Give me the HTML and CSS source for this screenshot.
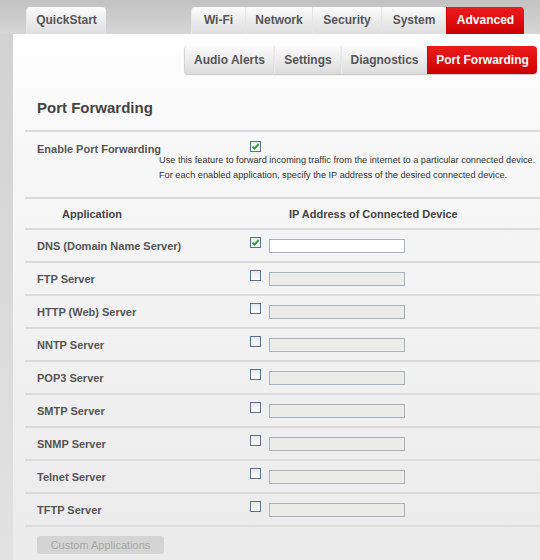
FILE: index.html
```html
<!DOCTYPE html>
<html lang="en">
<head>
    <meta charset="UTF-8">
    <title>Port Forwarding</title>
    <link rel="stylesheet" href="styles.css">
</head>
<body>
    <div class="topbar">
        <div class="tab tab-quick">QuickStart</div>
        <div class="tabs">
            <div class="tab w-wifi">Wi-Fi</div>
            <div class="tab w-net">Network</div>
            <div class="tab w-sec">Security</div>
            <div class="tab w-sys">System</div>
            <div class="tab w-adv active">Advanced</div>
        </div>
    </div>

    <div class="main">
        <div class="strip"></div>
        <div class="panel">
            <div class="subtabs">
                <div class="subtab s-audio">Audio Alerts</div>
                <div class="subtab s-set">Settings</div>
                <div class="subtab s-diag">Diagnostics</div>
                <div class="subtab s-pf active">Port Forwarding</div>
            </div>

            <h1 class="title">Port Forwarding</h1>

            <div class="section enable">
                <div class="enable-row">
                    <span class="label">Enable Port Forwarding</span>
                    <span class="cb checked"><svg viewBox="0 0 9 9"><path d="M1.5 4.6 L3.6 6.7 L7.6 2.2" /></svg></span>
                </div>
                <p class="desc">Use this feature to forward incoming traffic from the internet to a particular connected device.<br>For each enabled application, specify the IP address of the desired connected device.</p>
            </div>

            <div class="section head">
                <span class="h-app">Application</span>
                <span class="h-ip">IP Address of Connected Device</span>
            </div>

            <div class="row">
                <span class="label">DNS (Domain Name Server)</span>
                <span class="cb checked"><svg viewBox="0 0 9 9"><path d="M1.5 4.6 L3.6 6.7 L7.6 2.2" /></svg></span>
                <span class="ip"></span>
            </div>
            <div class="row">
                <span class="label">FTP Server</span>
                <span class="cb"></span>
                <span class="ip off"></span>
            </div>
            <div class="row">
                <span class="label">HTTP (Web) Server</span>
                <span class="cb"></span>
                <span class="ip off"></span>
            </div>
            <div class="row">
                <span class="label">NNTP Server</span>
                <span class="cb"></span>
                <span class="ip off"></span>
            </div>
            <div class="row">
                <span class="label">POP3 Server</span>
                <span class="cb"></span>
                <span class="ip off"></span>
            </div>
            <div class="row">
                <span class="label">SMTP Server</span>
                <span class="cb"></span>
                <span class="ip off"></span>
            </div>
            <div class="row">
                <span class="label">SNMP Server</span>
                <span class="cb"></span>
                <span class="ip off"></span>
            </div>
            <div class="row">
                <span class="label">Telnet Server</span>
                <span class="cb"></span>
                <span class="ip off"></span>
            </div>
            <div class="row last">
                <span class="label">TFTP Server</span>
                <span class="cb"></span>
                <span class="ip off"></span>
            </div>

            <div class="footer">
                <button class="btn-custom" disabled>Custom Applications</button>
            </div>
        </div>
    </div>
</body>
</html>
```

FILE: styles.css
```css
* { box-sizing: border-box; }

body {
    margin: 0;
    font-family: "Liberation Sans", Arial, sans-serif;
    background: #dcdcdc;
    color: #555;
    height: 560px;
    overflow: hidden;
}

/* top tabs */
.topbar {
    display: flex;
    align-items: flex-end;
    justify-content: space-between;
    height: 34px;
    padding: 0 16px 0 26px;
    background: linear-gradient(#c2c2c2, #d6d6d6);
}
.tabs { display: flex; }
.tab {
    height: 27px;
    line-height: 27px;
    text-align: center;
    font-size: 12px;
    font-weight: bold;
    color: #555;
    background: linear-gradient(#fbfbfb, #dedede);
    border-left: 1px solid #e6e6e6;
    border-radius: 4px 4px 0 0;
}
.tabs .tab { border-radius: 0; }
.tabs .tab:first-child { border-radius: 4px 0 0 0; }
.tabs .tab:last-child { border-radius: 0 4px 0 0; }
.tab-quick { width: 80px; }
.w-wifi { width: 54px; }
.w-net { width: 67px; }
.w-sec { width: 69px; }
.w-sys { width: 65px; }
.w-adv { width: 78px; }
.tab.active {
    background: linear-gradient(#ee1c1c, #cc0000);
    color: #fff;
    border-left-color: #d00;
}

/* body */
.main { display: flex; height: 526px; }
.strip {
    width: 13px;
    background: linear-gradient(#d2d2d2, #e2e2e2);
}
.panel {
    flex: 1;
    background: linear-gradient(#ffffff 0px, #f7f7f7 120px, #ebebeb 526px);
}

.subtabs {
    display: flex;
    justify-content: flex-end;
    padding: 12px 3px 0 0;
}
.subtab {
    height: 28px;
    line-height: 28px;
    text-align: center;
    font-size: 12px;
    font-weight: bold;
    color: #555;
    background: linear-gradient(#fbfbfb, #dcdcdc);
    border-left: 1px solid #e8e8e8;
    box-shadow: 0 1px 1px #c8c8c8;
}
.subtab:first-child { border-radius: 4px 0 0 4px; border-left: 1px solid #d4d4d4; }
.subtab:last-child { border-radius: 0 4px 4px 0; }
.s-audio { width: 90px; }
.s-set { width: 67px; }
.s-diag { width: 86px; }
.s-pf { width: 110px; }
.subtab.active {
    background: linear-gradient(#ee1c1c, #cc0000);
    color: #fff;
    border-left-color: #d00;
}

.title {
    margin: 0 0 0 12px;
    padding: 25px 0 0 12px;
    height: 58px;
    font-size: 15px;
    color: #444;
    border-bottom: 2px solid #dcdcdc;
}

.section, .row {
    margin-left: 12px;
    border-bottom: 2px solid #dcdcdc;
}

.enable { height: 67px; }
.enable-row {
    display: flex;
    align-items: flex-start;
    padding: 9px 0 0 12px;
    height: 22px;
}
.enable-row .label { width: 213px; margin-top: 2px; }
.label {
    font-size: 11px;
    font-weight: bold;
    color: #555;
}
.desc {
    margin: -1px 0 0 0;
    padding-left: 134px;
    font-size: 9.2px;
    line-height: 15px;
    color: #333;
}

.head {
    height: 31px;
    display: flex;
    align-items: center;
    font-size: 11px;
    font-weight: bold;
    color: #444;
}
.h-app { margin-left: 37px; width: 227px; }

.row {
    height: 33px;
    display: flex;
    align-items: center;
    padding-left: 12px;
}
.row .label { width: 213px; }

.cb {
    width: 11px;
    height: 11px;
    border: 1px solid #5a7290;
    background: linear-gradient(#e8e8e8, #ffffff);
    display: inline-flex;
    flex-shrink: 0;
    margin-top: -6px;
}
.cb svg { width: 9px; height: 9px; }
.cb svg path {
    fill: none;
    stroke: #2a9a2a;
    stroke-width: 1.8;
}
.enable-row .cb { margin-top: 0; }

.ip {
    width: 136px;
    height: 14px;
    margin-left: 8px;
    border: 1px solid #a7b3c0;
    background: #fff;
}
.ip.off { background: #ebebe7; }

.footer { padding: 8px 0 0 24px; }
.btn-custom {
    width: 127px;
    height: 18px;
    border: none;
    border-radius: 3px;
    background: #d4d4d4;
    color: #a8a8a8;
    font-family: "Liberation Sans", Arial, sans-serif;
    font-size: 11px;
    padding: 0;
}
```
